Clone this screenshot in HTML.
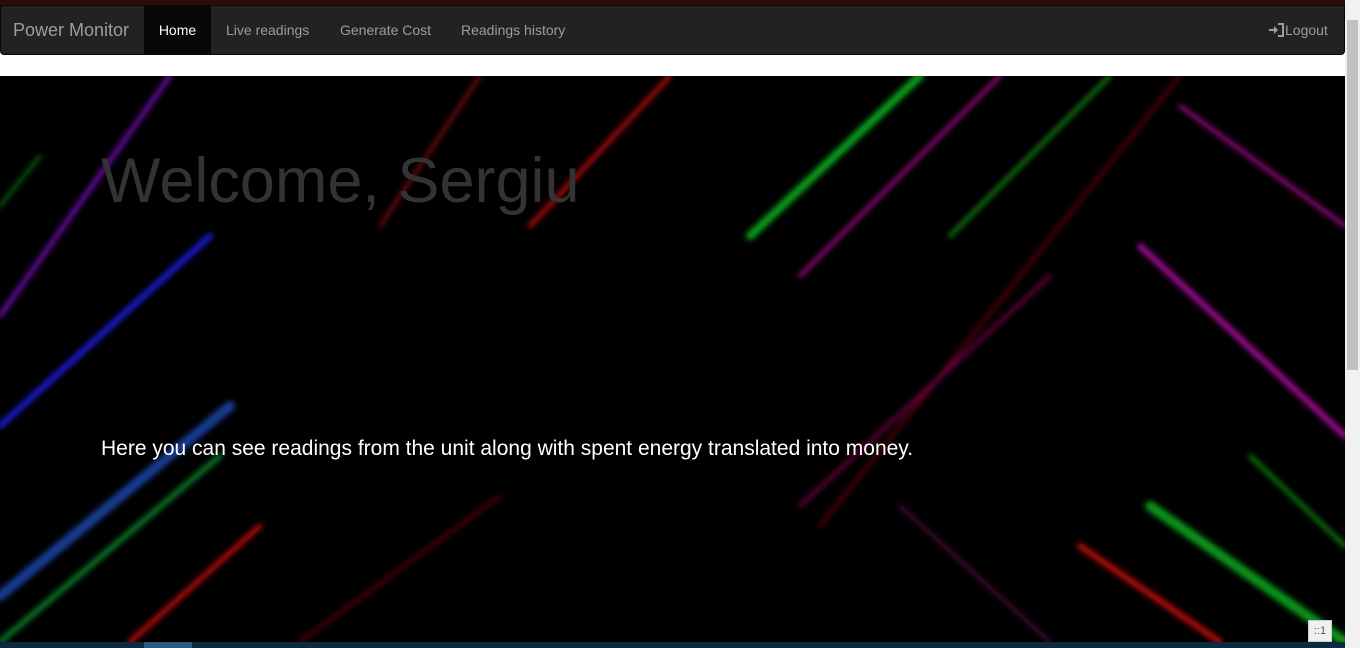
<!DOCTYPE html>
<html><head><style>
body{margin:0;width:1360px;height:648px;overflow:hidden;background:#fff;font-family:"Liberation Sans",Arial,sans-serif;position:relative}
#top{position:absolute;left:0;top:0;width:1345px;height:5px;background:#2a0c0c}
#nav{position:absolute;left:0;top:5px;width:1345px;height:50px;background:#222;border:1px solid #080808;box-sizing:border-box;border-radius:0 0 4px 4px}
#nav a{position:absolute;top:0;height:49px;line-height:49px;color:#9d9d9d;font-size:14px;text-decoration:none}
#hero{position:absolute;left:0;top:76px;width:1345px;height:566px;background:#000;overflow:hidden}
h1{position:absolute;left:101px;top:70px;margin:0;font-size:63px;font-weight:normal;color:#333;line-height:70px}
p{position:absolute;left:101px;top:361px;margin:0;font-size:21px;color:#fff}
#sb{position:absolute;right:0;top:0;width:15px;height:648px;background:#f1f1f1}
</style></head><body>
<div id="top"></div>
<div id="nav">
<a style="left:12px;font-size:18px;color:#9d9d9d">Power Monitor</a>
<a style="left:143px;width:67px;background:#080808;color:#fff;text-align:center">Home</a>
<a style="left:225px">Live readings</a>
<a style="left:339px">Generate Cost</a>
<a style="left:460px">Readings history</a>
<a style="left:1268px"><svg width="16" height="14" viewBox="0 0 16 14" style="vertical-align:-2px"><path d="M0 6h5V3l4 4-4 4V8H0z" fill="#9d9d9d"/><path d="M9 1h5v12H9" stroke="#9d9d9d" stroke-width="2" fill="none"/></svg>Logout</a>
</div>
<div id="hero">
<svg width="1345" height="566" style="position:absolute;left:0;top:0">
<defs><filter id="b"><feGaussianBlur stdDeviation="3"/></filter></defs>
<g filter="url(#b)" stroke-linecap="round" fill="none" opacity="0.85">
<line x1="0" y1="240" x2="170" y2="0" stroke="#7a10c0" stroke-width="5"/>
<line x1="0" y1="350" x2="210" y2="160" stroke="#2020ff" stroke-width="6"/>
<line x1="0" y1="130" x2="40" y2="80" stroke="#0a6a10" stroke-width="4"/>
<line x1="0" y1="520" x2="230" y2="330" stroke="#1a4ab0" stroke-width="10"/>
<line x1="0" y1="566" x2="220" y2="380" stroke="#10a030" stroke-width="5"/>
<line x1="130" y1="566" x2="260" y2="450" stroke="#e01010" stroke-width="5"/>
<line x1="380" y1="150" x2="480" y2="0" stroke="#801010" stroke-width="4"/>
<line x1="530" y1="150" x2="670" y2="0" stroke="#c01010" stroke-width="5"/>
<line x1="750" y1="160" x2="920" y2="0" stroke="#10c020" stroke-width="8"/>
<line x1="800" y1="200" x2="1000" y2="0" stroke="#c010a0" stroke-width="4"/>
<line x1="950" y1="160" x2="1110" y2="0" stroke="#10a010" stroke-width="4"/>
<line x1="820" y1="450" x2="1180" y2="0" stroke="#600010" stroke-width="4"/>
<line x1="800" y1="430" x2="1050" y2="200" stroke="#a01060" stroke-width="3"/>
<line x1="1180" y1="30" x2="1345" y2="150" stroke="#c010a0" stroke-width="4"/>
<line x1="1140" y1="170" x2="1345" y2="360" stroke="#c010b0" stroke-width="6"/>
<line x1="1080" y1="470" x2="1220" y2="566" stroke="#e01010" stroke-width="6"/>
<line x1="1150" y1="430" x2="1345" y2="566" stroke="#10b020" stroke-width="10"/>
<line x1="1250" y1="380" x2="1345" y2="470" stroke="#10a010" stroke-width="4"/>
<line x1="900" y1="430" x2="1050" y2="566" stroke="#501040" stroke-width="4"/>
<line x1="300" y1="566" x2="500" y2="420" stroke="#600010" stroke-width="4"/>
</g></svg>
<h1>Welcome, Sergiu</h1>
<p>Here you can see readings from the unit along with spent energy translated into money.</p>
</div>
<div style="position:absolute;left:0;top:642px;width:1345px;height:6px;background:#0b2a40"></div>
<div style="position:absolute;left:144px;top:642px;width:48px;height:6px;background:#2a5a80"></div>
<div style="position:absolute;left:1308px;top:620px;width:24px;height:22px;background:#f0f0f0;border:1px solid #ccc;box-sizing:border-box;font-size:11px;color:#555;text-align:center;line-height:20px">::1</div>
<div id="sb"><div style="position:absolute;left:2px;top:20px;width:11px;height:350px;background:#c1c1c1"></div></div>
</body></html>
